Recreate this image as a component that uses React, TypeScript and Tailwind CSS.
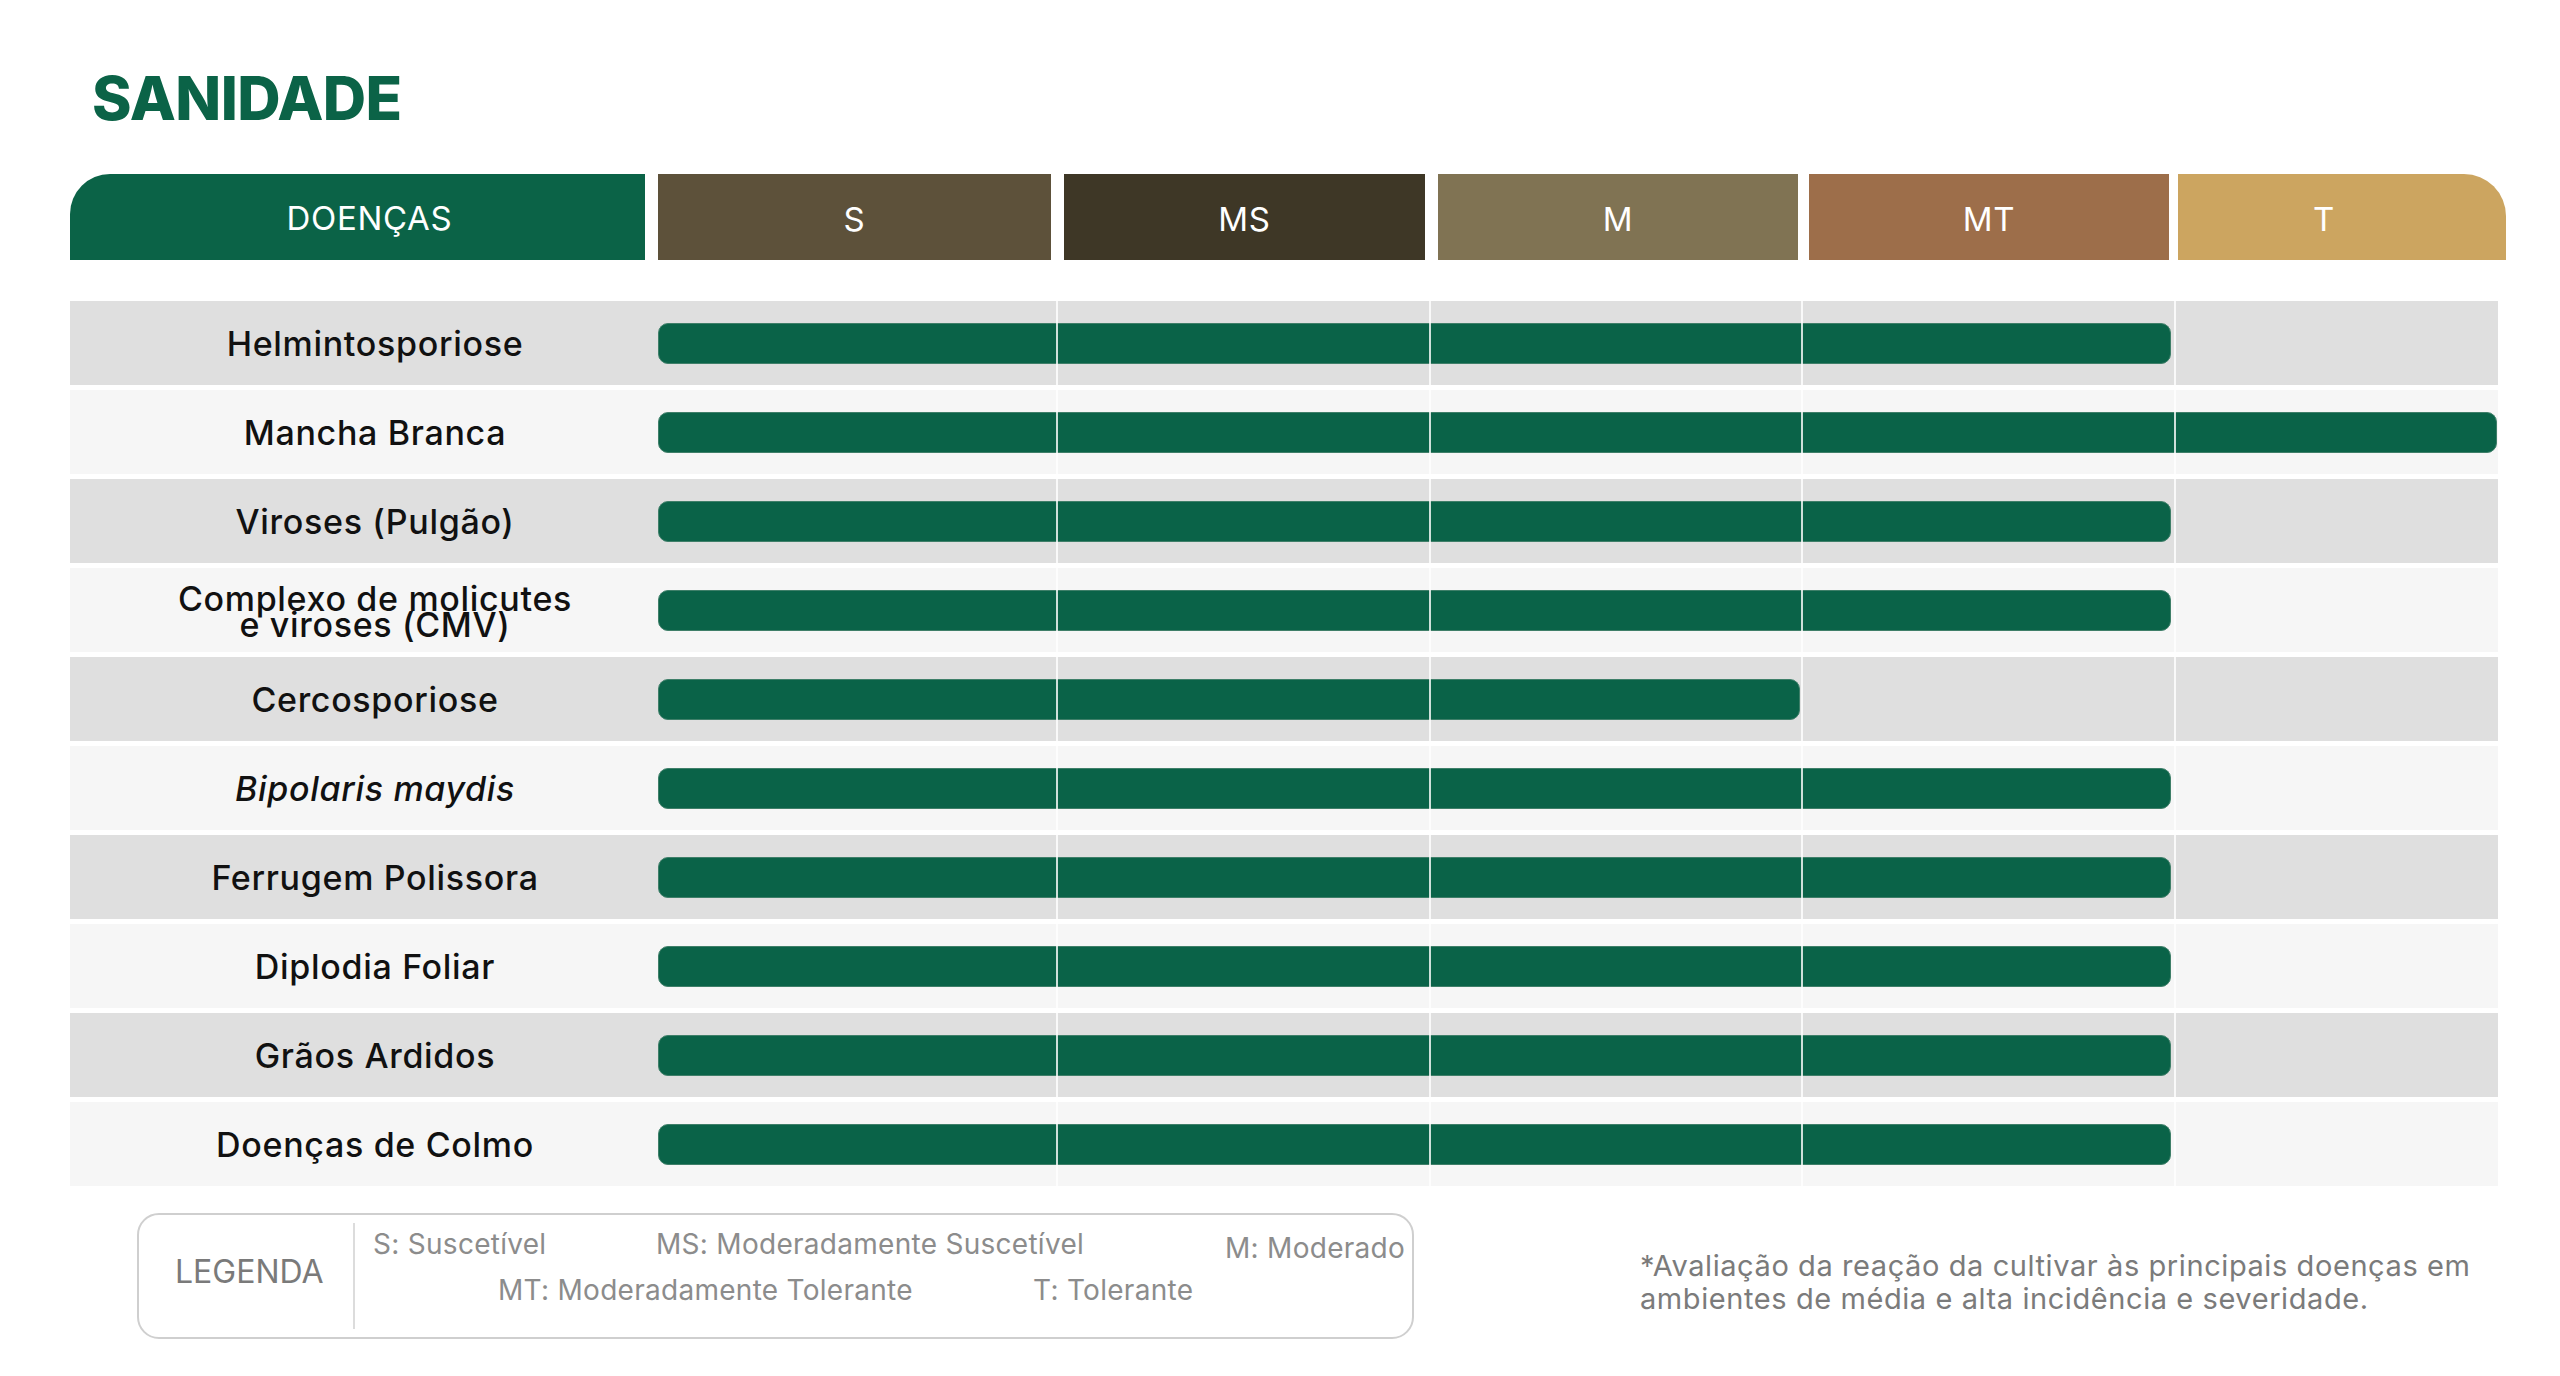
const font = { fontFamily: "Inter, 'Noto Sans', sans-serif" };

type Level = "M" | "MT" | "T";

interface Disease {
  name: string;
  level: Level;
  italic?: boolean;
  twoLines?: string[];
}

const diseases: Disease[] = [
  { name: "Helmintosporiose", level: "MT" },
  { name: "Mancha Branca", level: "T" },
  { name: "Viroses (Pulgão)", level: "MT" },
  { name: "Complexo de molicutes e viroses (CMV)", level: "MT", twoLines: ["Complexo de molicutes", "e viroses (CMV)"] },
  { name: "Cercosporiose", level: "M" },
  { name: "Bipolaris maydis", level: "MT", italic: true },
  { name: "Ferrugem Polissora", level: "MT" },
  { name: "Diplodia Foliar", level: "MT" },
  { name: "Grãos Ardidos", level: "MT" },
  { name: "Doenças de Colmo", level: "MT" },
];

const barWidth: Record<Level, string> = {
  M: "w-[1142px]",
  MT: "w-[1513px]",
  T: "w-[1839px]",
};

const HeaderRow = () => (
  <div className="flex h-[86px] text-white text-[33px] tracking-[0.02em]">
    <div className="w-[575px] bg-[#0b6347] rounded-tl-[40px] flex items-center justify-center pl-[24px] pt-[4px]">DOENÇAS</div>
    <div className="ml-[13px] w-[393px] bg-[#5d513a] flex items-center justify-center pt-[6px]">S</div>
    <div className="ml-[13px] w-[361px] bg-[#3e3726] flex items-center justify-center pt-[6px]">MS</div>
    <div className="ml-[13px] w-[360px] bg-[#807353] flex items-center justify-center pt-[6px]">M</div>
    <div className="ml-[11px] w-[360px] bg-[#9d6e4a] flex items-center justify-center pt-[6px]">MT</div>
    <div className="ml-[9px] w-[328px] bg-[#cca560] rounded-tr-[42px] flex items-center justify-center pt-[6px] pr-[36px]">T</div>
  </div>
);

const Row = ({ d, index }: { d: Disease; index: number }) => (
  <div className={`flex h-[84px] w-[2428px] ${index % 2 === 0 ? "bg-[#dfdfdf]" : "bg-[#f6f6f6]"}`}>
    <div className="w-[588px] pl-[22px] flex items-center justify-center text-center text-[34px] tracking-[0.02em] font-medium text-[#111111]">
      {d.twoLines ? (
        <div className="leading-[26px] pt-[4px]">
          <div>{d.twoLines[0]}</div>
          <div>{d.twoLines[1]}</div>
        </div>
      ) : (
        <span className={d.italic ? "italic" : ""}>{d.name}</span>
      )}
    </div>
    <div className="relative w-[1840px] flex items-center">
      <div className={`h-[41px] bg-[#0a6348] rounded-[10px] border border-[#3f7f69] ${barWidth[d.level]}`} />
      <div className="absolute top-0 bottom-0 left-[398px] w-[2px] bg-white/80" />
      <div className="absolute top-0 bottom-0 left-[771px] w-[2px] bg-white/80" />
      <div className="absolute top-0 bottom-0 left-[1143px] w-[2px] bg-white/80" />
      <div className="absolute top-0 bottom-0 left-[1516px] w-[2px] bg-white/80" />
    </div>
  </div>
);

const Legend = () => (
  <div className="ml-[137px] w-[1277px] h-[126px] border-2 border-[#cfcfcf] rounded-[22px] flex items-center">
    <div className="w-[214px] pl-[36px] text-[32px] text-[#7a7a7a] pb-[8px]">LEGENDA</div>
    <div className="self-stretch py-[8px]">
      <div className="w-[2px] h-full bg-[#dcdcdc]" />
    </div>
    <div className="self-start pt-[14px] pl-[18px] text-[28px] tracking-[0.01em] leading-[30px] text-[#8c8c8c]">
      <div className="flex">
        <div className="w-[283px]">S: Suscetível</div>
        <div className="w-[569px]">MS: Moderadamente Suscetível</div>
        <div className="pt-[4px]">M: Moderado</div>
      </div>
      <div className="flex mt-[12px] pl-[125px]">
        <div className="w-[535px]">MT: Moderadamente Tolerante</div>
        <div>T: Tolerante</div>
      </div>
    </div>
  </div>
);

export default function App() {
  return (
    <div className="w-[2560px] h-[1376px] bg-white overflow-hidden" style={font}>
      <div className="pl-[70px] pt-[68px]">
        <h1 className="ml-[22px] text-[60px] leading-[60px] font-extrabold text-[#0b6347] tracking-[-0.01em]">SANIDADE</h1>
        <div className="mt-[46px]">
          <HeaderRow />
        </div>
        <div className="mt-[41px] flex flex-col gap-[5px]">
          {diseases.map((d, i) => (
            <Row key={d.name} d={d} index={i} />
          ))}
        </div>
      </div>
      <div className="flex mt-[27px]">
        <Legend />
        <div className="ml-[226px] mt-[36px] text-[29px] tracking-[0.02em] leading-[33px] text-[#7b7b7b]">
          <div>*Avaliação da reação da cultivar às principais doenças em</div>
          <div>ambientes de média e alta incidência e severidade.</div>
        </div>
      </div>
    </div>
  );
}
